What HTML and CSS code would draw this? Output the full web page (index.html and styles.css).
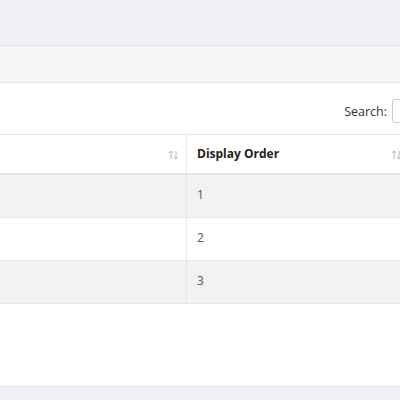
FILE: index.html
```html
<!DOCTYPE html>
<html>
<head>
<meta charset="utf-8">
<link rel="stylesheet" href="styles.css">
</head>
<body>
<div class="page">
  <div class="card">
    <div class="card-header"></div>
    <div class="card-body">
      <div class="toolbar">
        <label class="search">Search: <input type="text" class="search-input"></label>
      </div>
      <table class="grid">
        <thead>
          <tr>
            <th class="col-name"><span class="th-label"></span><svg class="sort" viewBox="0 0 11 10" width="11" height="10"><path d="M3 9V1M1 3l2-2 2 2M8 1v8M6 7l2 2 2-2" fill="none" stroke="currentColor" stroke-width="1"/></svg></th>
            <th class="col-order"><span class="th-label">Display Order</span><svg class="sort" viewBox="0 0 11 10" width="11" height="10"><path d="M3 9V1M1 3l2-2 2 2M8 1v8M6 7l2 2 2-2" fill="none" stroke="currentColor" stroke-width="1"/></svg></th>
            <th class="col-extra"></th>
          </tr>
        </thead>
        <tbody>
          <tr class="odd"><td></td><td>1</td><td></td></tr>
          <tr><td></td><td>2</td><td></td></tr>
          <tr class="odd"><td></td><td>3</td><td></td></tr>
        </tbody>
      </table>
    </div>
  </div>
</div>
</body>
</html>
```
FILE: styles.css
```css
html, body {
  margin: 0;
  padding: 0;
  overflow: hidden;
  background: #f0f1f6;
  font-family: "Open Sans", "Liberation Sans", sans-serif;
  color: #333;
}
.page {
  padding-top: 45px;
  width: 560px;
}
.card {
  background: #fff;
  border-top: 1px solid #e2e3e7;
  border-bottom: 1px solid #e2e3e7;
}
.card-header {
  height: 36px;
  background: #f6f6f6;
  border-bottom: 1px solid #e2e3e7;
}
.card-body {
  padding: 16px 0 82px 0;
}
.toolbar {
  display: flex;
  justify-content: flex-end;
  padding-right: 10px;
  margin-bottom: 11px;
}
.search {
  display: flex;
  align-items: center;
  gap: 5px;
  font-size: 12.5px;
  color: #333;
}
.search-input {
  width: 158px;
  height: 24px;
  box-sizing: border-box;
  border: 1px solid #ccc;
  border-radius: 3px;
  margin: 0;
  padding: 0 6px;
}
.grid {
  width: 100%;
  border-collapse: collapse;
  table-layout: fixed;
  font-size: 12px;
}
.grid th, .grid td {
  border: 1px solid #e5e7eb;
  padding: 0 10px;
  text-align: left;
}
.grid tr > :first-child { border-left: none; }
.grid th {
  height: 36px;
  padding-bottom: 2px;
  border-bottom: 2px solid #e3e5ea;
  font-weight: 700;
  color: #222;
  position: relative;
}
.col-name { width: 166px; }
.col-order { width: 202px; }
.th-label { vertical-align: middle; }
.sort {
  position: absolute;
  right: 7px;
  top: 15px;
  color: #b5b5b5;
}
.grid td {
  height: 38px;
  padding-bottom: 4px;
  color: #555;
}
.grid tr.odd td { background: #f2f2f2; }
```
